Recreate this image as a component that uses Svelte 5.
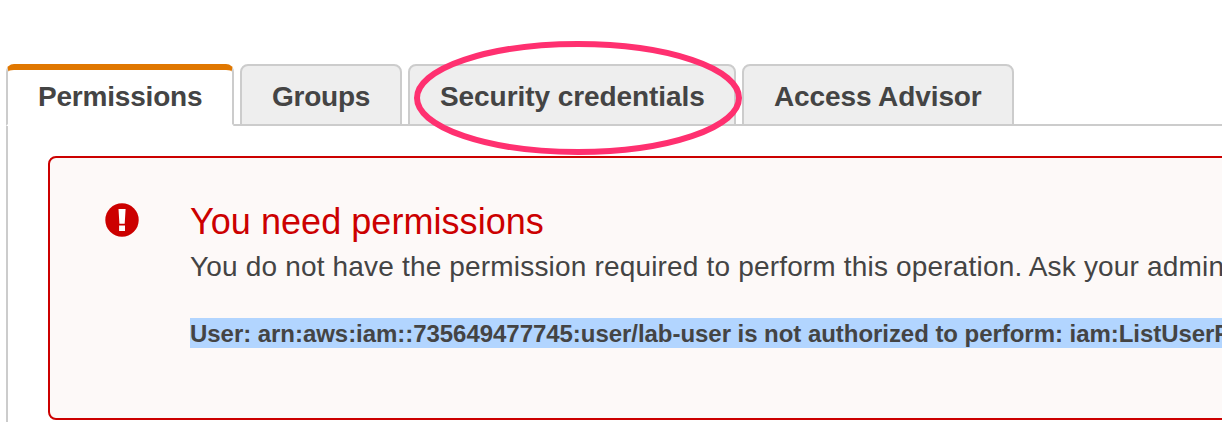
<script>
  const tabs = [
    { label: 'Permissions', width: 228, spacing: -0.2, active: true },
    { label: 'Groups', width: 162, spacing: -0.25 },
    { label: 'Security credentials', width: 328, spacing: -0.07 },
    { label: 'Access Advisor', width: 272, spacing: -0.1 }
  ];
</script>

<main>
  <nav>
    {#each tabs as tab}
      <button class="tab" class:active={tab.active} style:width="{tab.width}px" style:letter-spacing="{tab.spacing}px">{tab.label}</button>
    {/each}
  </nav>
  <section class="panel">
    <div class="alert">
      <svg class="icon" width="34" height="34" viewBox="0 0 34 34">
        <circle cx="17" cy="17" r="16.7" fill="#cc0000" />
        <path d="M13.5 6.1h7.1l-.9 14.7h-5.3zM14.1 22.6h5.9v5.4h-5.9z" fill="#fff" />
      </svg>
      <div class="message">
        <h1>You need permissions</h1>
        <p>You do not have the permission required to perform this operation. Ask your admin</p>
        <strong>User: arn:aws:iam::735649477745:user/lab-user is not authorized to perform: iam:ListUserP</strong>
      </div>
    </div>
  </section>
  <svg class="highlight" width="330" height="116" viewBox="0 0 330 116">
    <ellipse cx="165" cy="58" rx="161" ry="54" fill="none" stroke="#ff3070" stroke-width="6" />
  </svg>
</main>

<style>
  :global(body) { background: #fff; overflow: hidden; }
  main {
    position: relative;
    box-sizing: border-box;
    width: 1222px;
    height: 422px;
    padding: 64px 0 0 6px;
    overflow: hidden;
    display: flex;
    flex-direction: column;
    color: #444;
    font-family: "Liberation Sans", Arial, sans-serif;
  }
  nav {
    display: flex;
    flex: none;
    gap: 6px;
    height: 62px;
    background: linear-gradient(#ccc, #ccc) 227px 60px / 100% 2px no-repeat;
  }
  .tab {
    box-sizing: border-box;
    flex: none;
    height: 62px;
    margin: 0;
    padding: 4px 0 0 30px;
    border: 2px solid #ccc;
    border-radius: 8px 8px 0 0;
    background: #eee;
    color: #444;
    font: bold 28px/54px "Liberation Sans", Arial, sans-serif;
    text-align: left;
    white-space: nowrap;
  }
  .tab.active {
    padding-top: 0;
    border-top: 6px solid #e07700;
    border-bottom-color: #fff;
    border-radius: 8px 8px 2px 0;
    background: #fff;
  }
  .panel {
    flex: 1;
    border-left: 2px solid #ccc;
    padding: 30px 0 0 40px;
  }
  .alert {
    box-sizing: border-box;
    display: flex;
    width: 1300px;
    height: 264px;
    padding: 45px 0 0 55px;
    border: 2px solid #c00;
    border-radius: 8px;
    background: #fdf9f8;
  }
  .icon { flex: none; width: 34px; margin-right: 51px; }
  .message { white-space: nowrap; }
  h1 {
    margin: -3px 0 0;
    color: #c00;
    font-size: 36px;
    font-weight: normal;
    line-height: 44px;
    letter-spacing: 0.05px;
  }
  p { margin: 0 0 28px; font-size: 28px; line-height: 46px; letter-spacing: 0.175px; }
  strong {
    display: block;
    height: 30px;
    background: #b2d5ff;
    font-size: 24px;
    line-height: 32px;
    letter-spacing: -0.045px;
  }
  .highlight { position: absolute; left: 413px; top: 40px; }
</style>
